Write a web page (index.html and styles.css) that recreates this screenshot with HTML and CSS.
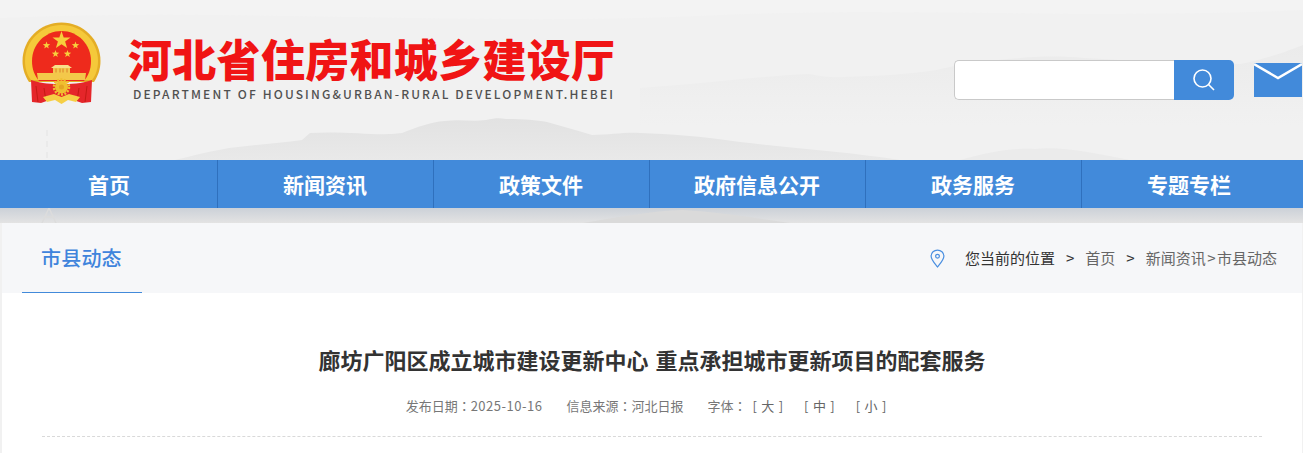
FILE: index.html
```html
<!DOCTYPE html>
<html lang="zh-CN">
<head>
    <meta charset="UTF-8">
    <title>河北省住房和城乡建设厅</title>
    <link rel="stylesheet" href="styles.css">
</head>
<body>
    <div class="page">
        <svg class="ink" viewBox="0 0 1303 223" preserveAspectRatio="none">
            <defs>
                <linearGradient id="ridge" x1="0" y1="0" x2="0" y2="1">
                    <stop offset="0" stop-color="#e2e2e2"/>
                    <stop offset="1" stop-color="#e9e9e9"/>
                </linearGradient>
                <linearGradient id="far" x1="0" y1="0" x2="0" y2="1">
                    <stop offset="0" stop-color="#ebebeb"/>
                    <stop offset="1" stop-color="#f1f1f1"/>
                </linearGradient>
                <linearGradient id="under" x1="0" y1="0" x2="0" y2="1">
                    <stop offset="0" stop-color="#ccd1d8"/>
                    <stop offset="1" stop-color="#e3e3e3"/>
                </linearGradient>
            </defs>
            <path fill="url(#far)" d="M640 88 C700 84 760 76 809 74 C820 76 832 78 843 77 C880 76 910 74 936 70 C960 64 990 60 1020 58 C1040 56 1065 56 1084 58 C1130 60 1180 66 1240 64 C1270 58 1290 50 1303 45 V125 H640Z"/>
            <path fill="#f3f3f3" d="M0 0 H1303 V10 C1100 20 900 6 700 16 C460 26 240 8 0 18Z"/>
            <path fill="url(#ridge)" d="M175 160 C195 155 212 151 229 148 C255 145 280 143 302 140 L310 133 C340 131 370 135 392 134 L402 133 C418 127 430 122 445 121 C460 119 472 122 486 120 C495 118 500 118 506 119 C522 119 536 120 547 122 C562 126 578 131 592 135 C610 135 625 132 640 133 C670 134 700 136 740 142 C790 148 850 152 900 160Z"/>
            <path fill="#ebebeb" d="M960 160 C990 152 1010 148 1035 149 C1060 146 1090 152 1130 160Z"/>
            <path fill="none" stroke="#e7e7e7" stroke-width="1.500" stroke-dasharray="6 5" d="M47 130 V160"/>
            <rect x="0" y="208" width="1303" height="15" fill="url(#under)"/>
            <path fill="none" stroke="#dcdcdc" stroke-width="1.500" d="M42 223 L49 208 L56 223 M45 217 H53"/>
            <path fill="#dadada" d="M583 223 C620 217 650 211 683 210 C720 212 755 218 790 223Z"/>
        </svg>
        <header class="top">
            <svg class="emblem" viewBox="0 0 80 84">
                <path fill="#e4ad25" d="M39.500 0.500 C61 0.500 78.500 17.500 78.500 39 C78.500 47 76 54 72 60 H7 C3 54 0.500 47 0.500 39 C0.500 17.500 18 0.500 39.500 0.500Z"/>
                <path fill="#f5c93a" d="M39.500 3 C59.500 3 76 19 76 39 C76 46 74 53 70 58 H9 C5 53 3 46 3 39 C3 19 19.500 3 39.500 3Z"/>
                <path fill="#ee2a1c" d="M39.500 9 C56 9 69 22.500 69 39 C69 48 66 54 62 59 H17 C13 54 10 48 10 39 C10 22.500 23 9 39.500 9Z"/>
                <path fill="#f7cf3c" d="M39.500 9 l2.200 6.400 6.800 .1 -5.400 4.100 2 6.500 -5.600-3.900 -5.600 3.900 2-6.500 -5.400-4.100 6.800-.1Z"/>
                <path fill="#f7cf3c" d="M24.500 19.500 l.9 2.600 2.800 .1 -2.200 1.700 .8 2.700 -2.300-1.600 -2.300 1.600 .8-2.700 -2.200-1.700 2.800-.1Z"/>
                <path fill="#f7cf3c" d="M53.500 19.500 l.9 2.600 2.800 .1 -2.200 1.700 .8 2.700 -2.300-1.600 -2.300 1.600 .8-2.700 -2.200-1.700 2.800-.1Z"/>
                <path fill="#f7cf3c" d="M33.500 28 l.9 2.600 2.800 .1 -2.200 1.700 .8 2.700 -2.300-1.600 -2.300 1.600 .8-2.700 -2.200-1.700 2.800-.1Z"/>
                <path fill="#f7cf3c" d="M45.500 28 l.9 2.600 2.800 .1 -2.200 1.700 .8 2.700 -2.300-1.600 -2.300 1.600 .8-2.700 -2.200-1.700 2.800-.1Z"/>
                <path fill="#f8e08a" d="M33 43 H46 L50 46 H29Z"/>
                <path fill="#f2c94e" d="M31 46 H48 V51 H31Z"/>
                <path d="M34 46.500 V50.500 M38 46.500 V50.500 M41 46.500 V50.500 M45 46.500 V50.500" stroke="#d9701e" stroke-width=".8"/>
                <path fill="#f3c84a" d="M15 51 H64 L63 58 H16Z"/>
                <path fill="#e5262a" d="M9 58 C20 62 30 62 39.500 62 C49 62 59 62 70 58 L69 80 L60 81 L46 76 H33 L19 81 L10 80Z"/>
                <path d="M14 64 L16 80 M22 66 L24 79 M65 64 L63 80 M57 66 L55 79" stroke="#c41a14" stroke-width="1"/>
                <circle fill="#f0bf30" cx="39.500" cy="65" r="6.500"/>
                <circle fill="none" stroke="#f0bf30" stroke-width="2.500" stroke-dasharray="2 1.400" cx="39.500" cy="65" r="7.500"/>
                <circle fill="#e3a524" cx="39.500" cy="65" r="2.500"/>
                <path fill="#f6cf45" d="M21 75 L32 72 L39.500 75 L47 72 L58 75 L54 80 L46 78 L39.500 82 L33 78 L25 80Z"/>
            </svg>
            <div class="brand">
                <div class="brand-name">河北省住房和城乡建设厅</div>
                <div class="brand-en">DEPARTMENT OF HOUSING&amp;URBAN-RURAL DEVELOPMENT.HEBEI</div>
            </div>
            <div class="tools">
                <div class="search">
                    <input class="search-input" type="text">
                    <button class="search-btn">
                        <svg viewBox="0 0 24 24" width="24" height="24" fill="none" stroke="#fff" stroke-width="1.600">
                            <circle cx="10.500" cy="10.500" r="8.500"/>
                            <path d="M16.500 16.500 L22 22"/>
                        </svg>
                    </button>
                </div>
                <svg class="mail" viewBox="0 0 48 34">
                    <rect width="48" height="34" fill="#428ada"/>
                    <path d="M0 1 L24 15 L48 1" fill="none" stroke="#fff" stroke-width="2.400"/>
                </svg>
            </div>
        </header>
        <nav class="nav">
            <a class="nav-item">首页</a>
            <a class="nav-item">新闻资讯</a>
            <a class="nav-item">政策文件</a>
            <a class="nav-item">政府信息公开</a>
            <a class="nav-item">政务服务</a>
            <a class="nav-item">专题专栏</a>
        </nav>
        <div class="card">
            <div class="card-head">
                <div class="tab">市县动态</div>
                <div class="crumbs">
                    <svg class="pin" viewBox="0 0 16 20" fill="none" stroke="#4a8fe0" stroke-width="1.300">
                        <path d="M8 19 C4 14 1.200 11 1.200 7.500 C1.200 3.700 4.300 1 8 1 C11.700 1 14.800 3.700 14.800 7.500 C14.800 11 12 14 8 19Z"/>
                        <circle cx="8" cy="7.500" r="2"/>
                    </svg>
                    <span class="here">您当前的位置</span>
                    <span class="sep">&gt;</span>
                    <span>首页</span>
                    <span class="sep">&gt;</span>
                    <span>新闻资讯<span class="gt">&gt;</span>市县动态</span>
                </div>
            </div>
            <div class="article">
                <h1 class="article-title">廊坊广阳区成立城市建设更新中心 重点承担城市更新项目的配套服务</h1>
                <div class="meta">
                    <span>发布日期<span class="colon" lang="zh-TW">：</span><span class="date">2025-10-16</span></span>
                    <span>信息来源<span class="colon" lang="zh-TW">：</span>河北日报</span>
                    <span class="sizes">字体<span class="colon" lang="zh-TW">：</span><a>[ 大 ]</a><a>[ 中 ]</a><a>[ 小 ]</a></span>
                </div>
            </div>
        </div>
    </div>
</body>
</html>
```

FILE: styles.css
```css
html, body {
    margin: 0;
    padding: 0;
    height: 453px;
    overflow: hidden;
}

body {
    font-family: "Noto Sans CJK SC", "Liberation Sans", sans-serif;
    background: #f1f1f1;
}

.page {
    position: relative;
    height: 453px;
    overflow: hidden;
}

.ink {
    position: absolute;
    left: 0;
    top: 0;
    width: 1303px;
    height: 223px;
}

.top {
    position: relative;
    display: flex;
    align-items: flex-start;
    height: 160px;
    padding-left: 22px;
    box-sizing: border-box;
}

.emblem {
    width: 80px;
    height: 84px;
    margin-top: 22px;
    flex: none;
}

.brand {
    margin-left: 26px;
    margin-top: 32px;
    flex: none;
}

.brand-name {
    font-size: 44px;
    line-height: 52px;
    font-weight: 900;
    letter-spacing: .3px;
    color: #f01414;
    white-space: nowrap;
}

.brand-en {
    margin-top: 2px;
    margin-left: 5px;
    font-size: 12px;
    line-height: 16px;
    font-weight: 500;
    letter-spacing: 2.140px;
    color: #505050;
    white-space: nowrap;
}

.tools {
    display: flex;
    align-items: flex-start;
    margin-left: auto;
    margin-top: 60px;
}

.search {
    display: flex;
    width: 280px;
    height: 40px;
}

.search-input {
    width: 220px;
    height: 40px;
    box-sizing: border-box;
    border: 1px solid #c9c9c9;
    border-right: none;
    border-radius: 5px 0 0 5px;
    background: #fff;
    outline: none;
}

.search-btn {
    display: flex;
    align-items: center;
    justify-content: center;
    width: 60px;
    height: 40px;
    border: none;
    padding: 0;
    background: #428ada;
    border-radius: 0 5px 5px 0;
}

.mail {
    display: block;
    width: 48px;
    height: 34px;
    margin-left: 20px;
    margin-top: 3px;
    margin-right: 1px;
}

.nav {
    position: relative;
    display: flex;
    height: 48px;
    padding-left: 1px;
    background: #428ada;
}

.nav-item {
    width: 216px;
    line-height: 48px;
    text-align: center;
    font-size: 21px;
    font-weight: 700;
    color: #fff;
    border-right: 1px solid #2f70bd;
    margin-right: -1px;
}

.nav-item:last-child {
    border-right: none;
}

.card {
    position: relative;
    margin: 15px 1px 0 2px;
    background: #fff;
    height: 230px;
}

.card-head {
    display: flex;
    align-items: center;
    justify-content: space-between;
    height: 70px;
    background: #f6f7f9;
    padding: 0 25px 0 20px;
}

.tab {
    width: 120px;
    height: 70px;
    box-sizing: border-box;
    line-height: 70px;
    padding-left: 19px;
    font-size: 20px;
    font-weight: 500;
    letter-spacing: .2px;
    color: #3f84dc;
    border-bottom: 1px solid #428ada;
}

.crumbs {
    display: flex;
    align-items: center;
    font-size: 15px;
    line-height: 20px;
    color: #666;
}

.pin {
    width: 15px;
    height: 19px;
    margin-right: 20px;
}

.here {
    color: #333;
}

.sep {
    margin: 0 11px;
    color: #333;
}

.gt {
    margin: 0 1.500px;
}

.article {
    padding: 0 40px;
}

.article-title {
    margin: 0;
    padding-top: 50px;
    font-size: 22px;
    line-height: 32px;
    font-weight: 700;
    word-spacing: 2px;
    color: #333;
    text-align: center;
}

.meta {
    display: flex;
    justify-content: center;
    gap: 24px;
    height: 62px;
    padding: 21px 12px 0 0;
    box-sizing: border-box;
    border-bottom: 1px dashed #d9d9d9;
    font-size: 13px;
    line-height: 20px;
    color: #777;
}

.colon {
    font-family: "Noto Sans CJK TC", sans-serif;
}

.date {
    letter-spacing: .5px;
}

.sizes a {
    margin-right: 21px;
    word-spacing: 1.500px;
    color: #666;
}

.sizes .colon {
    margin-right: 6px;
}

.sizes a:last-child {
    margin-right: 0;
}
```
